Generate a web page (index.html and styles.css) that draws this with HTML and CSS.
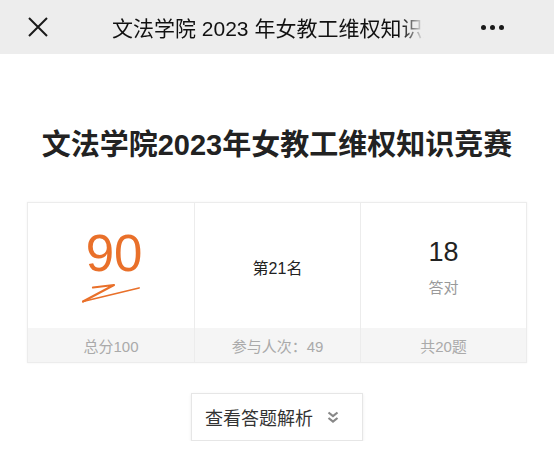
FILE: index.html
```html
<!DOCTYPE html>
<html lang="zh-CN">
<head>
  <meta charset="UTF-8" />
  <meta name="viewport" content="width=device-width, initial-scale=1" />
  <title>文法学院2023年女教工维权知识竞赛</title>
  <link rel="stylesheet" href="styles.css">
</head>
<body>

  <!-- Top bar -->
  <div class="topbar">
    <svg class="close-icon" width="20" height="20" viewBox="0 0 20 20">
      <path d="M1 1 L19 19 M19 1 L1 19" stroke="#1a1a1a" stroke-width="2" fill="none" />
    </svg>
    <div class="bar-title">文法学院 2023 年女教工维权知识竞赛</div>
    <div class="more">
      <span class="dot"></span><span class="dot"></span><span class="dot"></span>
    </div>
  </div>

  <h1 class="heading">文法学院2023年女教工维权知识竞赛</h1>

  <!-- Result card -->
  <div class="result">
    <div class="cell">
      <div class="cell-main">
        <div class="score">90</div>
        <svg class="scribble" width="60" height="20" viewBox="0 0 60 20">
          <path d="M11 4.5 L32 2 L1 18.5" stroke="#e9702a" stroke-width="2.2" fill="none" stroke-linejoin="round" stroke-linecap="round" />
          <path d="M1 18.5 L57 5" stroke="#e9702a" stroke-width="1.8" fill="none" stroke-linecap="round" />
        </svg>
      </div>
      <div class="cell-foot">总分100</div>
    </div>
    <div class="cell">
      <div class="cell-main">
        <div class="rank">第21名</div>
      </div>
      <div class="cell-foot">参与人次：49</div>
    </div>
    <div class="cell">
      <div class="cell-main right">
        <div class="correct">18</div>
        <div class="correct-label">答对</div>
      </div>
      <div class="cell-foot">共20题</div>
    </div>
  </div>

  <div class="actions">
    <button class="analysis-btn">
      查看答题解析
      <svg width="12" height="13" viewBox="0 0 12 13">
        <path d="M1.5 1.5 L6 5.2 L10.5 1.5 M1.5 7 L6 10.7 L10.5 7" stroke="#888" stroke-width="2.2" fill="none" />
      </svg>
    </button>
  </div>

</body>
</html>
```

FILE: styles.css
```css
* {
  box-sizing: border-box;
}

body {
  margin: 0;
  background: #fff;
  font-family: "Liberation Sans", "Noto Sans CJK SC", sans-serif;
  color: #222;
}

.topbar {
  height: 54px;
  background: #ededed;
  display: flex;
  align-items: center;
  padding: 0 0 0 28px;
}

.close-icon {
  flex: none;
}

.bar-title {
  margin-left: 64px;
  width: 312px;
  white-space: nowrap;
  overflow: hidden;
  font-size: 21px;
  color: #111;
  -webkit-mask-image: linear-gradient(to right, #000 290px, transparent 312px);
  mask-image: linear-gradient(to right, #000 290px, transparent 312px);
}

.more {
  margin-left: 57px;
  display: flex;
  gap: 4px;
}

.dot {
  width: 5px;
  height: 5px;
  border-radius: 50%;
  background: #1a1a1a;
}

.heading {
  margin: 74px 0 40px;
  text-align: center;
  font-size: 29px;
  font-weight: bold;
  line-height: 34px;
  color: #222;
}

.result {
  width: 500px;
  margin: 0 auto;
  display: grid;
  grid-template-columns: 1fr 1fr 1fr;
  border: 1px solid #ececec;
  box-shadow: 0 0 2px rgba(0,0,0,0.06);
}

.cell {
  border-left: 1px solid #ececec;
  display: flex;
  flex-direction: column;
}

.cell:first-child {
  border-left: none;
}

.cell-main {
  height: 125px;
  display: flex;
  flex-direction: column;
  align-items: center;
  justify-content: center;
}

.cell-main.right {
  padding-top: 2px;
}

.score {
  font-size: 51px;
  line-height: 50px;
  color: #e9702a;
  margin-left: 6px;
}

.scribble {
  margin-top: 4px;
  margin-left: 2px;
}

.rank {
  font-size: 16px;
  color: #222;
  margin-top: 2px;
}

.correct {
  font-size: 27px;
  line-height: 32px;
  color: #222;
}

.correct-label {
  margin-top: 8px;
  font-size: 15px;
  color: #999;
}

.cell-foot {
  height: 34px;
  background: #f5f5f5;
  color: #aaa;
  font-size: 15px;
  display: flex;
  align-items: center;
  justify-content: center;
}

.actions {
  display: flex;
  justify-content: center;
  margin-top: 30px;
}

.analysis-btn {
  width: 172px;
  height: 48px;
  background: #fff;
  border: 1px solid #e6e6e6;
  box-shadow: 0 1px 3px rgba(0,0,0,0.08);
  font-family: "Liberation Sans", "Noto Sans CJK SC", sans-serif;
  font-size: 18px;
  color: #333;
  display: flex;
  align-items: center;
  gap: 14px;
  padding: 0 0 0 13px;
}
```
